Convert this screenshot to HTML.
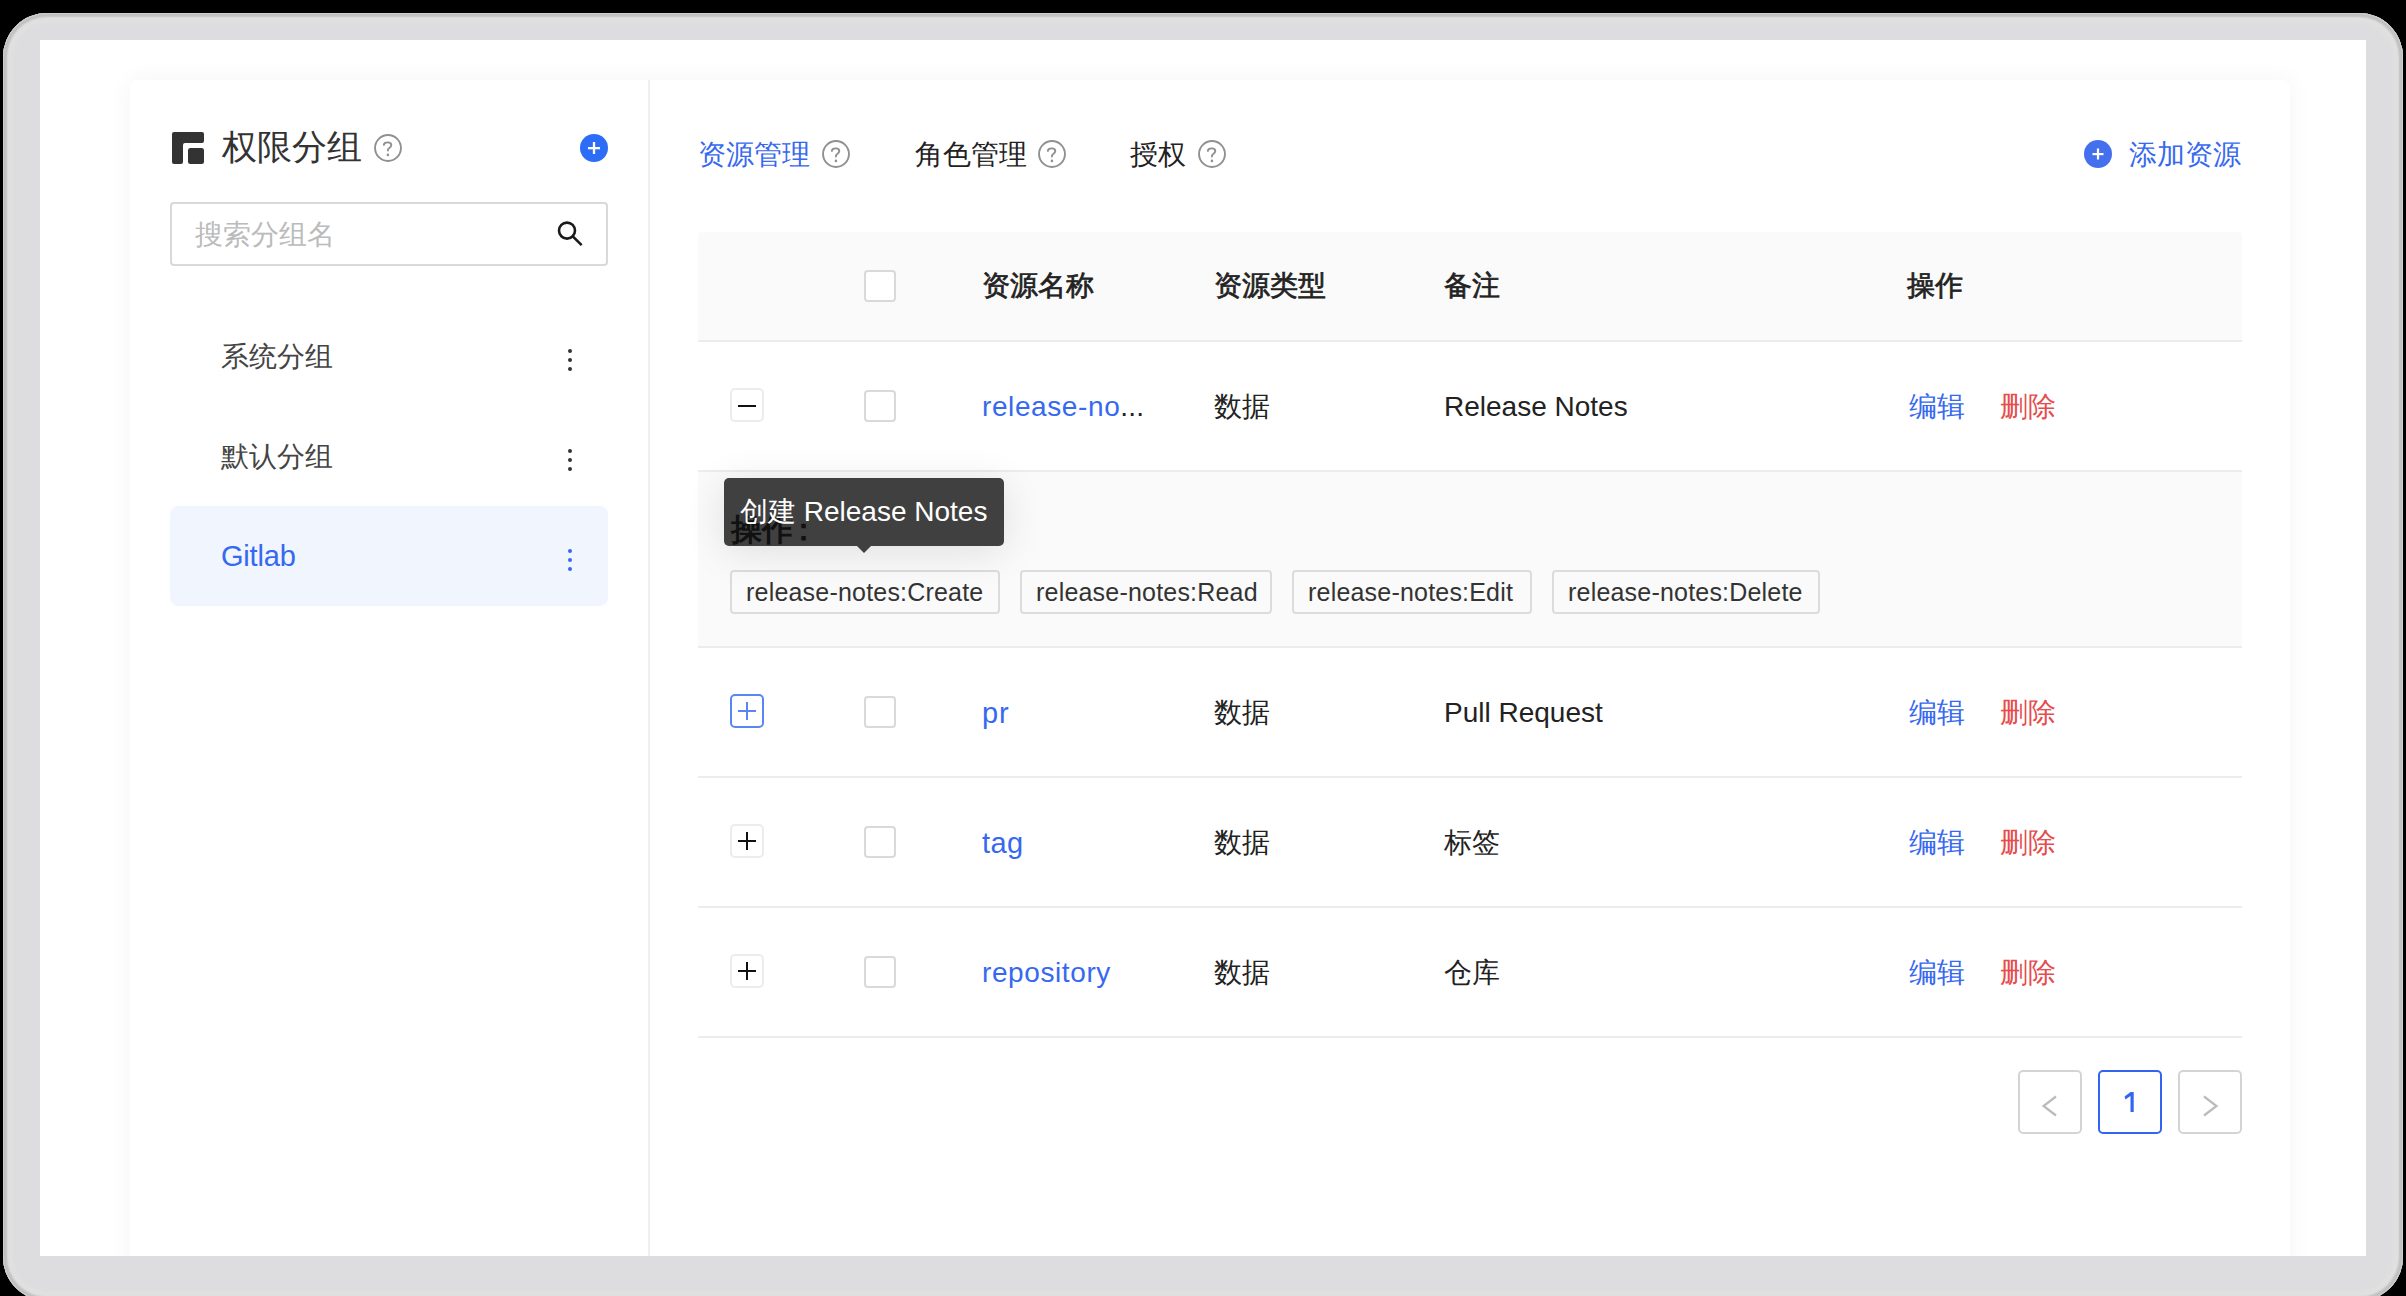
<!DOCTYPE html>
<html><head><meta charset="utf-8">
<style>
*{margin:0;padding:0;box-sizing:border-box}
html,body{width:2406px;height:1296px;overflow:hidden;background:#000}
body{font-family:"Liberation Sans",sans-serif;position:relative;color:#333}
.a{position:absolute}
#frame{left:3px;top:13px;width:2400px;height:1288px;border-radius:44px;background:#dddddf;
 box-shadow:inset 0 0 0 1px #cdcdcd, inset 0 0 2px 4px #c0c0c0, inset 0 0 4px 9px #e1e1e1;}
#white{left:40px;top:40px;width:2326px;height:1216px;background:#fff;overflow:hidden}
#card{left:90px;top:40px;width:2160px;height:1300px;background:#fff;border-radius:8px;
 box-shadow:0 0 24px 2px rgba(0,0,0,0.04)}
#divider{left:648px;top:80px;width:2px;height:1176px;background:#efefef}
.t{white-space:nowrap;line-height:1}
.q{width:28px;height:28px;border:2px solid #999;border-radius:50%}
.q:after{content:"?";position:absolute;left:0;top:2px;width:24px;text-align:center;font-size:20px;color:#999;line-height:20px}
.cb{width:32px;height:32px;border:2px solid #d9d9d9;border-radius:4px;background:#fff}
.exp{width:34px;height:34px;border:2px solid #ececec;border-radius:5px;background:#fff}
.exp i{position:absolute;background:#111}
.exp .h{left:6px;top:14px;width:18px;height:2.2px}
.exp .v{left:13.9px;top:6px;width:2.2px;height:18px}
.hline{height:2px;background:#ececec}
.tag{height:44px;border:2px solid #dcdcdc;border-radius:4px;background:#fafafa;font-size:25px;color:#333;line-height:40px;padding:0 14px;letter-spacing:0.2px;white-space:nowrap}
.dots{width:4px;height:22px}
.dots i{position:absolute;left:0;width:4px;height:4px;border-radius:50%;background:#333}
.pg{width:64px;height:64px;border:2px solid #d4d4d4;border-radius:5px;background:#fff}
</style></head><body>
<div id="frame" class="a"></div>
<div id="white" class="a"><div id="card" class="a"></div></div>
<div id="divider" class="a"></div>

<!-- left panel header -->
<svg class="a" style="left:172px;top:132px" width="32" height="32" viewBox="0 0 32 32">
 <path d="M2 0H30a2 2 0 0 1 2 2V9a2 2 0 0 1-2 2H13a2 2 0 0 0-2 2V30a2 2 0 0 1-2 2H2a2 2 0 0 1-2-2V2a2 2 0 0 1 2-2z" fill="#333"/>
 <rect x="16" y="16" width="16" height="16" rx="2.5" fill="#333"/>
</svg>
<div class="a t" style="left:222px;top:129px;font-size:35px;color:#333">权限分组</div>
<svg class="a" style="left:374px;top:134px" width="28" height="28" viewBox="0 0 28 28"><circle cx="14" cy="14" r="12.95" fill="none" stroke="#909090" stroke-width="1.9"/><path d="M9.9 10.9C9.9 9.2 11.5 8.4 13.8 8.4C16 8.4 17.3 9.6 17.3 11.1C17.3 12.6 16.4 13.3 15.3 14C14.3 14.6 13.9 15.4 13.9 16.4V16.6" fill="none" stroke="#909090" stroke-width="1.9" stroke-linecap="round"/><circle cx="13.9" cy="20.9" r="1.3" fill="#909090"/></svg>
<svg class="a" style="left:580px;top:134px" width="28" height="28" viewBox="0 0 28 28">
 <circle cx="14" cy="14" r="14" fill="#2c6cf6"/>
 <rect x="8" y="13" width="12" height="2.3" fill="#fff"/><rect x="12.85" y="8" width="2.3" height="12" fill="#fff"/>
</svg>

<!-- search -->
<div class="a" style="left:170px;top:202px;width:438px;height:64px;border:2px solid #d9d9d9;border-radius:4px"></div>
<div class="a t" style="left:195px;top:221px;font-size:28px;color:#bbb">搜索分组名</div>
<svg class="a" style="left:552px;top:216px" width="34" height="34" viewBox="0 0 34 34">
 <circle cx="15" cy="14.6" r="8" fill="none" stroke="#1a1a1a" stroke-width="2.6"/>
 <line x1="20.8" y1="20.4" x2="29.6" y2="29.2" stroke="#1a1a1a" stroke-width="2.6"/>
</svg>

<!-- groups -->
<div class="a t" style="left:221px;top:343px;font-size:28px;color:#444">系统分组</div>
<div class="a dots" style="left:568px;top:349px"><i style="top:0"></i><i style="top:9px"></i><i style="top:18px"></i></div>
<div class="a t" style="left:221px;top:443px;font-size:28px;color:#444">默认分组</div>
<div class="a dots" style="left:568px;top:449px"><i style="top:0"></i><i style="top:9px"></i><i style="top:18px"></i></div>
<div class="a" style="left:170px;top:506px;width:438px;height:100px;border-radius:8px;background:#f0f5fe"></div>
<div class="a t" style="left:221px;top:542px;font-size:29px;letter-spacing:-0.2px;color:#3668f0">Gitlab</div>
<div class="a dots" style="left:568px;top:549px"><i style="top:0;background:#3668f0"></i><i style="top:9px;background:#3668f0"></i><i style="top:18px;background:#3668f0"></i></div>

<!-- tabs -->
<div class="a t" style="left:698px;top:141px;font-size:28px;color:#3668f0">资源管理</div>
<svg class="a" style="left:822px;top:140px" width="28" height="28" viewBox="0 0 28 28"><circle cx="14" cy="14" r="12.95" fill="none" stroke="#909090" stroke-width="1.9"/><path d="M9.9 10.9C9.9 9.2 11.5 8.4 13.8 8.4C16 8.4 17.3 9.6 17.3 11.1C17.3 12.6 16.4 13.3 15.3 14C14.3 14.6 13.9 15.4 13.9 16.4V16.6" fill="none" stroke="#909090" stroke-width="1.9" stroke-linecap="round"/><circle cx="13.9" cy="20.9" r="1.3" fill="#909090"/></svg>
<div class="a t" style="left:915px;top:141px;font-size:28px;color:#222">角色管理</div>
<svg class="a" style="left:1038px;top:140px" width="28" height="28" viewBox="0 0 28 28"><circle cx="14" cy="14" r="12.95" fill="none" stroke="#909090" stroke-width="1.9"/><path d="M9.9 10.9C9.9 9.2 11.5 8.4 13.8 8.4C16 8.4 17.3 9.6 17.3 11.1C17.3 12.6 16.4 13.3 15.3 14C14.3 14.6 13.9 15.4 13.9 16.4V16.6" fill="none" stroke="#909090" stroke-width="1.9" stroke-linecap="round"/><circle cx="13.9" cy="20.9" r="1.3" fill="#909090"/></svg>
<div class="a t" style="left:1130px;top:141px;font-size:28px;color:#222">授权</div>
<svg class="a" style="left:1198px;top:140px" width="28" height="28" viewBox="0 0 28 28"><circle cx="14" cy="14" r="12.95" fill="none" stroke="#909090" stroke-width="1.9"/><path d="M9.9 10.9C9.9 9.2 11.5 8.4 13.8 8.4C16 8.4 17.3 9.6 17.3 11.1C17.3 12.6 16.4 13.3 15.3 14C14.3 14.6 13.9 15.4 13.9 16.4V16.6" fill="none" stroke="#909090" stroke-width="1.9" stroke-linecap="round"/><circle cx="13.9" cy="20.9" r="1.3" fill="#909090"/></svg>

<svg class="a" style="left:2084px;top:140px" width="28" height="28" viewBox="0 0 28 28">
 <circle cx="14" cy="14" r="14" fill="#4470ee"/>
 <rect x="8.5" y="13" width="11" height="2.2" fill="#fff"/><rect x="12.9" y="8.5" width="2.2" height="11" fill="#fff"/>
</svg>
<div class="a t" style="left:2129px;top:141px;font-size:28px;color:#3668f0">添加资源</div>

<!-- table header -->
<div class="a" style="left:698px;top:232px;width:1544px;height:108px;background:#fafafa;border-radius:4px 4px 0 0"></div>
<div class="a hline" style="left:698px;top:340px;width:1544px"></div>
<div class="a cb" style="left:864px;top:270px"></div>
<div class="a t" style="left:982px;top:272px;font-size:28px;color:#222;-webkit-text-stroke:0.7px #222">资源名称</div>
<div class="a t" style="left:1214px;top:272px;font-size:28px;color:#222;-webkit-text-stroke:0.7px #222">资源类型</div>
<div class="a t" style="left:1444px;top:272px;font-size:28px;color:#222;-webkit-text-stroke:0.7px #222">备注</div>
<div class="a t" style="left:1907px;top:272px;font-size:28px;color:#222;-webkit-text-stroke:0.7px #222">操作</div>

<!-- row 1 -->
<div class="a exp" style="left:730px;top:388px"><i class="h" style="top:14.9px"></i></div>
<div class="a cb" style="left:864px;top:390px"></div>
<div class="a t" style="left:982px;top:393px;font-size:28px;color:#3668f0;letter-spacing:0.6px">release-no<span style="color:#222;letter-spacing:0.2px">...</span></div>
<div class="a t" style="left:1214px;top:393px;font-size:28px;color:#222">数据</div>
<div class="a t" style="left:1444px;top:393px;font-size:28px;color:#222">Release Notes</div>
<div class="a t" style="left:1909px;top:393px;font-size:28px;color:#3668f0">编辑</div>
<div class="a t" style="left:2000px;top:393px;font-size:28px;color:#e64c4c">删除</div>
<div class="a hline" style="left:698px;top:470px;width:1544px"></div>

<!-- expanded -->
<div class="a" style="left:698px;top:472px;width:1544px;height:174px;background:#fafafa"></div>
<div class="a tag" style="left:730px;top:570px;width:270px">release-notes:Create</div>
<div class="a tag" style="left:1020px;top:570px;width:252px">release-notes:Read</div>
<div class="a tag" style="left:1292px;top:570px;width:240px">release-notes:Edit</div>
<div class="a tag" style="left:1552px;top:570px;width:268px">release-notes:Delete</div>
<div class="a hline" style="left:698px;top:646px;width:1544px"></div>

<!-- row pr -->
<div class="a exp" style="left:730px;top:694px;border-color:#5a86f5"><i class="h" style="background:#5a86f5;height:2px"></i><i class="v" style="background:#5a86f5;width:2px;left:14px"></i></div>
<div class="a cb" style="left:864px;top:696px"></div>
<div class="a t" style="left:982px;top:699px;font-size:29px;color:#3668f0;letter-spacing:0.8px">pr</div>
<div class="a t" style="left:1214px;top:699px;font-size:28px;color:#222">数据</div>
<div class="a t" style="left:1444px;top:699px;font-size:28px;color:#222">Pull Request</div>
<div class="a t" style="left:1909px;top:699px;font-size:28px;color:#3668f0">编辑</div>
<div class="a t" style="left:2000px;top:699px;font-size:28px;color:#e64c4c">删除</div>
<div class="a hline" style="left:698px;top:776px;width:1544px"></div>

<!-- row tag -->
<div class="a exp" style="left:730px;top:824px"><i class="h"></i><i class="v"></i></div>
<div class="a cb" style="left:864px;top:826px"></div>
<div class="a t" style="left:982px;top:829px;font-size:29px;color:#3668f0;letter-spacing:0.4px">tag</div>
<div class="a t" style="left:1214px;top:829px;font-size:28px;color:#222">数据</div>
<div class="a t" style="left:1444px;top:829px;font-size:28px;color:#222">标签</div>
<div class="a t" style="left:1909px;top:829px;font-size:28px;color:#3668f0">编辑</div>
<div class="a t" style="left:2000px;top:829px;font-size:28px;color:#e64c4c">删除</div>
<div class="a hline" style="left:698px;top:906px;width:1544px"></div>

<!-- row repo -->
<div class="a exp" style="left:730px;top:954px"><i class="h"></i><i class="v"></i></div>
<div class="a cb" style="left:864px;top:956px"></div>
<div class="a t" style="left:982px;top:959px;font-size:28px;color:#3668f0;letter-spacing:0.6px">repository</div>
<div class="a t" style="left:1214px;top:959px;font-size:28px;color:#222">数据</div>
<div class="a t" style="left:1444px;top:959px;font-size:28px;color:#222">仓库</div>
<div class="a t" style="left:1909px;top:959px;font-size:28px;color:#3668f0">编辑</div>
<div class="a t" style="left:2000px;top:959px;font-size:28px;color:#e64c4c">删除</div>
<div class="a hline" style="left:698px;top:1036px;width:1544px"></div>

<!-- pagination -->
<div class="a pg" style="left:2018px;top:1070px"></div>
<svg class="a" style="left:2036px;top:1090px" width="28" height="32" viewBox="0 0 28 32"><path d="M20 6.5L7.5 16L20 25.5" fill="none" stroke="#bbb" stroke-width="2.2"/></svg>
<div class="a pg" style="left:2098px;top:1070px;border-color:#3464f2"></div>
<svg class="a" style="left:2120px;top:1088px" width="20" height="28" viewBox="0 0 20 28"><path d="M4.6 8.6L10.6 4H13.7V23.9H10.5V8L5.4 11.4Z" fill="#3464f2"/></svg>
<div class="a pg" style="left:2178px;top:1070px"></div>
<svg class="a" style="left:2196px;top:1090px" width="28" height="32" viewBox="0 0 28 32"><path d="M8 6.5L20.5 16L8 25.5" fill="none" stroke="#bbb" stroke-width="2.2"/></svg>

<!-- tooltip -->
<div class="a" style="left:724px;top:478px;width:280px;height:68px;background:#404040;border-radius:5px;box-shadow:0 6px 40px rgba(0,0,0,0.11)"></div>
<svg class="a" style="left:854px;top:545px" width="20" height="9" viewBox="0 0 20 9"><path d="M2 0L10 8L18 0z" fill="#404040"/></svg>
<div class="a t" style="left:731px;top:514px;font-size:31px;color:#111;font-weight:bold">操作<span style="margin-left:-5px">：</span></div>
<div class="a t" style="left:740px;top:498px;font-size:28px;color:#fff">创建 Release Notes</div>

</body></html>
